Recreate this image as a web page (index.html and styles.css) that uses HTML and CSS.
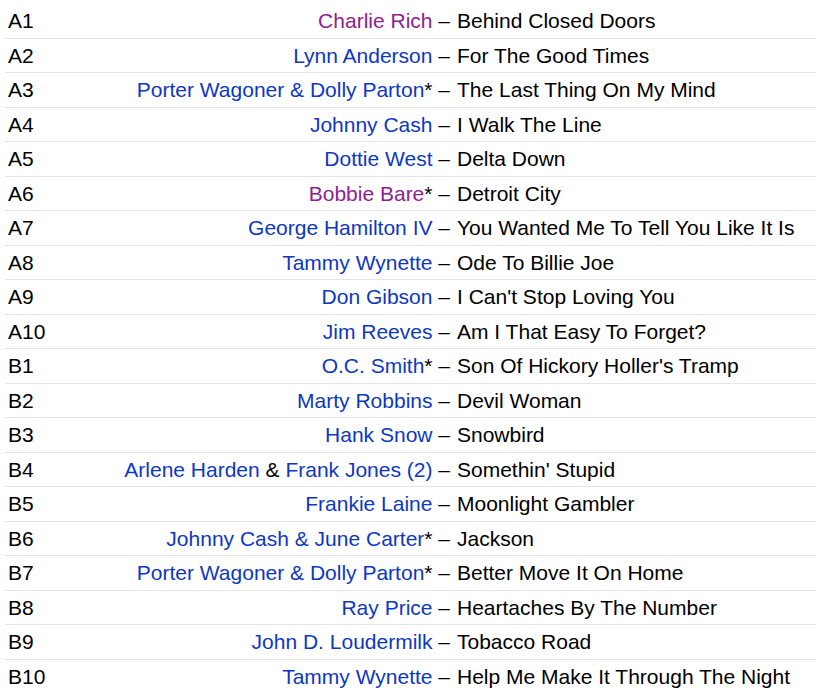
FILE: index.html
```html
<!DOCTYPE html>
<html>
<head>
<meta charset="utf-8">
<link rel="stylesheet" href="styles.css">
</head>
<body>
<table class="tracklist">
<tbody>
<tr><td class="pos">A1</td><td class="artist"><a class="visited">Charlie Rich</a> –</td><td class="title">Behind Closed Doors</td></tr>
<tr><td class="pos">A2</td><td class="artist"><a>Lynn Anderson</a> –</td><td class="title">For The Good Times</td></tr>
<tr><td class="pos">A3</td><td class="artist"><a>Porter Wagoner &amp; Dolly Parton</a>* –</td><td class="title">The Last Thing On My Mind</td></tr>
<tr><td class="pos">A4</td><td class="artist"><a>Johnny Cash</a> –</td><td class="title">I Walk The Line</td></tr>
<tr><td class="pos">A5</td><td class="artist"><a>Dottie West</a> –</td><td class="title">Delta Down</td></tr>
<tr><td class="pos">A6</td><td class="artist"><a class="visited">Bobbie Bare</a>* –</td><td class="title">Detroit City</td></tr>
<tr><td class="pos">A7</td><td class="artist"><a>George Hamilton IV</a> –</td><td class="title">You Wanted Me To Tell You Like It Is</td></tr>
<tr><td class="pos">A8</td><td class="artist"><a>Tammy Wynette</a> –</td><td class="title">Ode To Billie Joe</td></tr>
<tr><td class="pos">A9</td><td class="artist"><a>Don Gibson</a> –</td><td class="title">I Can't Stop Loving You</td></tr>
<tr><td class="pos">A10</td><td class="artist"><a>Jim Reeves</a> –</td><td class="title">Am I That Easy To Forget?</td></tr>
<tr><td class="pos">B1</td><td class="artist"><a>O.C. Smith</a>* –</td><td class="title">Son Of Hickory Holler's Tramp</td></tr>
<tr><td class="pos">B2</td><td class="artist"><a>Marty Robbins</a> –</td><td class="title">Devil Woman</td></tr>
<tr><td class="pos">B3</td><td class="artist"><a>Hank Snow</a> –</td><td class="title">Snowbird</td></tr>
<tr><td class="pos">B4</td><td class="artist"><a>Arlene Harden</a> &amp; <a>Frank Jones (2)</a> –</td><td class="title">Somethin' Stupid</td></tr>
<tr><td class="pos">B5</td><td class="artist"><a>Frankie Laine</a> –</td><td class="title">Moonlight Gambler</td></tr>
<tr><td class="pos">B6</td><td class="artist"><a>Johnny Cash &amp; June Carter</a>* –</td><td class="title">Jackson</td></tr>
<tr><td class="pos">B7</td><td class="artist"><a>Porter Wagoner &amp; Dolly Parton</a>* –</td><td class="title">Better Move It On Home</td></tr>
<tr><td class="pos">B8</td><td class="artist"><a>Ray Price</a> –</td><td class="title">Heartaches By The Number</td></tr>
<tr><td class="pos">B9</td><td class="artist"><a>John D. Loudermilk</a> –</td><td class="title">Tobacco Road</td></tr>
<tr><td class="pos">B10</td><td class="artist"><a>Tammy Wynette</a> –</td><td class="title">Help Me Make It Through The Night</td></tr>
</tbody>
</table>
</body>
</html>
```
FILE: styles.css
```css
html, body {
  margin: 0;
  padding: 0;
  background: #ffffff;
}
body {
  font-family: "Liberation Sans", Arial, sans-serif;
  font-size: 21px;
  color: #000000;
}
.tracklist {
  border-collapse: collapse;
  margin: 3px 0 0 5px;
  width: 811px;
  table-layout: fixed;
}
.tracklist td {
  padding: 0;
  height: 33.5px;
  line-height: 33.5px;
  white-space: nowrap;
  border-top: 1px solid #e4e4e4;
  vertical-align: middle;
}
.tracklist tr:first-child td {
  border-top: none;
  height: 34.5px;
}
.pos {
  width: 100px;
  padding-left: 3px !important;
  box-sizing: border-box;
}
.artist {
  width: 345px;
  text-align: right;
}
.title {
  padding-left: 7px !important;
}
.artist a {
  color: #0d38c2;
  text-decoration: none;
}
.artist a.visited {
  color: #8e2290;
}
```
